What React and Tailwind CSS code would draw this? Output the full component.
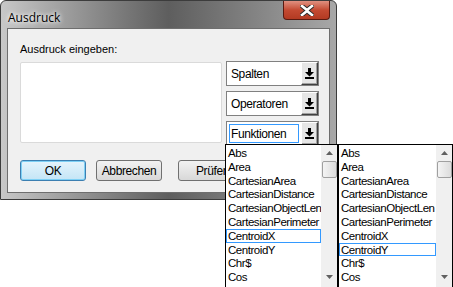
import React from "react";

const items = [
  "Abs",
  "Area",
  "CartesianArea",
  "CartesianDistance",
  "CartesianObjectLen",
  "CartesianPerimeter",
  "CentroidX",
  "CentroidY",
  "Chr$",
  "Cos",
];

function ArrowBtn() {
  return (
    <div className="w-[17px] h-full bg-[#e6e6e6] border-t border-l border-t-white border-l-white border-b border-r border-b-[#404040] border-r-[#404040] flex items-center justify-center shadow-[inset_-1px_-1px_0_#a0a0a0]">
      <svg width="9" height="11" viewBox="0 0 9 11">
        <path d="M3 0h3v4h3l-4.5 4.5L0 4h3z" fill="#000" />
        <rect x="0" y="9" width="9" height="2" fill="#000" />
      </svg>
    </div>
  );
}

function Combo({ label, focused }) {
  return (
    <div className="flex h-[25px] w-[93px] border border-[#808080] bg-white">
      <div className="flex-1 p-[2px]">
        <div
          className={
            "h-full flex items-center pl-[1px] text-[12px] tracking-[-0.4px] " +
            (focused ? "border border-[#3399ff]" : "border border-transparent")
          }
        >
          {label}
        </div>
      </div>
      <ArrowBtn />
    </div>
  );
}

function ListBox({ sel, className }) {
  return (
    <div className={"absolute top-[144px] h-[150px] bg-white border border-black flex " + className}>
      <div className="flex-1 min-w-0 overflow-hidden flex flex-col pt-[1px]">
        {items.map((it, i) => (
          <div
            key={it}
            className={
              "h-[13.8px] leading-[12px] pl-[1px] text-[11.5px] tracking-[-0.45px] whitespace-nowrap border " +
              (i === sel ? "border-[#3399ff]" : "border-transparent")
            }
          >
            {it}
          </div>
        ))}
      </div>
      <div className="w-[16px] shrink-0 bg-[#f0f0f0] flex flex-col items-center">
        <div className="h-[16px] w-full flex items-center justify-center">
          <svg width="7" height="4" viewBox="0 0 7 4"><path d="M0 4L3.5 0L7 4z" fill="#606060" /></svg>
        </div>
        <div className="w-[15px] h-[17px] rounded-[2px] border border-[#a0a0a0] bg-gradient-to-r from-[#f4f4f4] to-[#dcdcdc]" />
        <div className="flex-1" />
        <div className="h-[16px] w-full flex items-center justify-center mb-[8px]">
          <svg width="7" height="4" viewBox="0 0 7 4"><path d="M0 0L3.5 4L7 0z" fill="#606060" /></svg>
        </div>
      </div>
    </div>
  );
}

export default function App() {
  return (
    <div
      className="relative w-[453px] h-[287px] bg-white overflow-hidden text-black"
      style={{ fontFamily: '"Liberation Sans", Arial, sans-serif' }}
    >
      <div className="w-[337px] h-[200px] rounded-t-[6px] border border-[#3c3c3c] flex flex-col bg-gradient-to-r from-[#c8c8c8] via-[#5e5e5e] to-[#a8a8a8]">
        <div className="h-[27px] flex items-start justify-between pl-[7px]">
          <div className="text-[12px] pt-[8px]" style={{ fontFamily: '"Open Sans", "Liberation Sans", sans-serif', textShadow: "0 0 6px #fff, 0 0 4px #fff" }}>
            Ausdruck
          </div>
          <div className="mr-[6px] w-[47px] h-[19px] rounded-b-[4px] border border-[#5a1a10] border-t-0 bg-gradient-to-b from-[#e09080] via-[#c44a32] to-[#b33a22] flex items-center justify-center">
            <svg width="14" height="11" viewBox="0 0 14 11">
              <path d="M2 1L7 5L12 1M2 10L7 6L12 10" stroke="#2a2a2a" strokeWidth="4.5" fill="none" strokeLinecap="square" />
              <path d="M2 1L7 5L12 1M2 10L7 6L12 10" stroke="#fff" strokeWidth="2.6" fill="none" strokeLinecap="square" />
            </svg>
          </div>
        </div>
        <div className="flex-1 mx-[6px] mb-[6px] border border-[#6e6e6e] bg-[#f0f0f0] flex flex-col pl-[12px] pt-[14px]">
          <div className="text-[11px] leading-[12px]">Ausdruck eingeben:</div>
          <div className="flex gap-[4px] mt-[7px]">
            <div className="w-[202px] h-[81px] bg-white border border-[#dadada] rounded-[2px]" />
            <div className="flex flex-col gap-[5px] -mt-[1px]">
              <Combo label="Spalten" />
              <Combo label="Operatoren" />
              <Combo label="Funktionen" focused />
            </div>
          </div>
          <div className="flex mt-[14px] text-[12px] tracking-[-0.4px]">
            <div className="w-[66px] h-[21px] rounded-[3px] border border-[#3c7fb1] bg-gradient-to-b from-[#e5f4fc] to-[#c4e5f6] shadow-[inset_0_0_0_1px_#7ed0f5] flex items-center justify-center">
              OK
            </div>
            <div className="ml-[10px] w-[66px] h-[21px] rounded-[3px] border border-[#707070] bg-gradient-to-b from-[#f2f2f2] to-[#d8d8d8] flex items-center justify-center">
              Abbrechen
            </div>
            <div className="ml-[16px] w-[66px] h-[21px] rounded-[3px] border border-[#707070] bg-gradient-to-b from-[#f2f2f2] to-[#d8d8d8] flex items-center pl-[17px]">
              Prüfen
            </div>
          </div>
        </div>
      </div>
      <ListBox sel={6} className="left-[225px] w-[113px]" />
      <ListBox sel={7} className="left-[338px] w-[115px]" />
    </div>
  );
}
